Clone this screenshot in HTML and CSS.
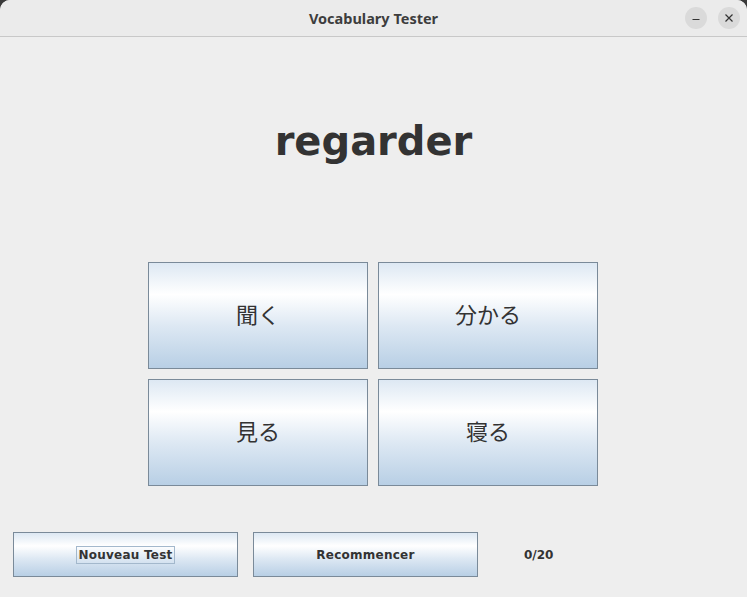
FILE: index.html
```html
<!DOCTYPE html>
<html lang="fr">
<head>
<meta charset="utf-8">
<title>Vocabulary Tester</title>
<link rel="stylesheet" href="styles.css">
</head>
<body>
<div class="window">
  <header class="titlebar">
    <span class="title">Vocabulary Tester</span>
    <div class="controls">
      <button class="ctl" aria-label="Minimize">
        <svg width="10" height="10" viewBox="0 0 10 10"><path d="M1.5 6.5h7" stroke="#333" stroke-width="1.2"/></svg>
      </button>
      <button class="ctl" aria-label="Close">
        <svg width="10" height="10" viewBox="0 0 10 10"><path d="M1.5 1.5l7 7M8.5 1.5l-7 7" stroke="#333" stroke-width="1.2"/></svg>
      </button>
    </div>
  </header>
  <main class="content">
    <h1 class="word">regarder</h1>
    <div class="choices">
      <button class="choice">聞く</button>
      <button class="choice">分かる</button>
      <button class="choice">見る</button>
      <button class="choice">寝る</button>
    </div>
    <div class="bottom">
      <button class="action"><span class="focus">Nouveau Test</span></button>
      <button class="action">Recommencer</button>
      <span class="score">0/20</span>
    </div>
  </main>
</div>
</body>
</html>
```

FILE: styles.css
```css
html, body {
  margin: 0;
  padding: 0;
  background: #3a3a3a;
}
.window {
  width: 747px;
  height: 597px;
  background: #eeeeee;
  border-radius: 10px 10px 0 0;
  overflow: hidden;
  display: flex;
  flex-direction: column;
}
.titlebar {
  height: 36px;
  border-bottom: 1px solid #c8c8c8;
  background: #ebebeb;
  display: flex;
  align-items: center;
  justify-content: center;
  position: relative;
  font-family: "Noto Sans", "DejaVu Sans", sans-serif;
}
.title {
  font-weight: bold;
  font-size: 14.5px;
  color: #3d3d3d;
}
.controls {
  position: absolute;
  right: 7px;
  top: 7px;
  display: flex;
  gap: 11px;
}
.ctl {
  width: 22px;
  height: 22px;
  border-radius: 50%;
  border: none;
  background: #dadada;
  padding: 0;
  display: flex;
  align-items: center;
  justify-content: center;
}
.content {
  flex: 1;
  display: flex;
  flex-direction: column;
  font-family: "DejaVu Sans", sans-serif;
  color: #333333;
}
.word {
  margin: 80px 0 0;
  font-size: 40px;
  line-height: 48px;
  font-weight: bold;
  text-align: center;
  color: #333333;
}
.choices {
  margin-top: 97px;
  margin-right: 1px;
  align-self: center;
  display: grid;
  grid-template-columns: 220px 220px;
  grid-template-rows: 107px 107px;
  gap: 10px;
}
.choice, .action {
  border: 1px solid #7a8a99;
  background: linear-gradient(to bottom, #dde8f3 0%, #ffffff 30%, #dde8f3 60%, #b8cfe5 100%);
  color: #333333;
  padding: 0;
  margin: 0;
}
.choice {
  font-family: "Noto Sans CJK JP", sans-serif;
  font-size: 22px;
  font-weight: normal;
  padding-bottom: 6px;
}
.bottom {
  margin-top: 46px;
  padding-left: 13px;
  display: flex;
  align-items: center;
  gap: 15px;
}
.action {
  width: 225px;
  height: 45px;
  font-family: "DejaVu Sans", sans-serif;
  font-weight: bold;
  font-size: 12px;
  letter-spacing: 0.25px;
}
.focus {
  border: 1px solid #a3b8cc;
  padding: 1px;
}
.score {
  margin-left: 31px;
  font-weight: bold;
  font-size: 12px;
  color: #333333;
}
```
